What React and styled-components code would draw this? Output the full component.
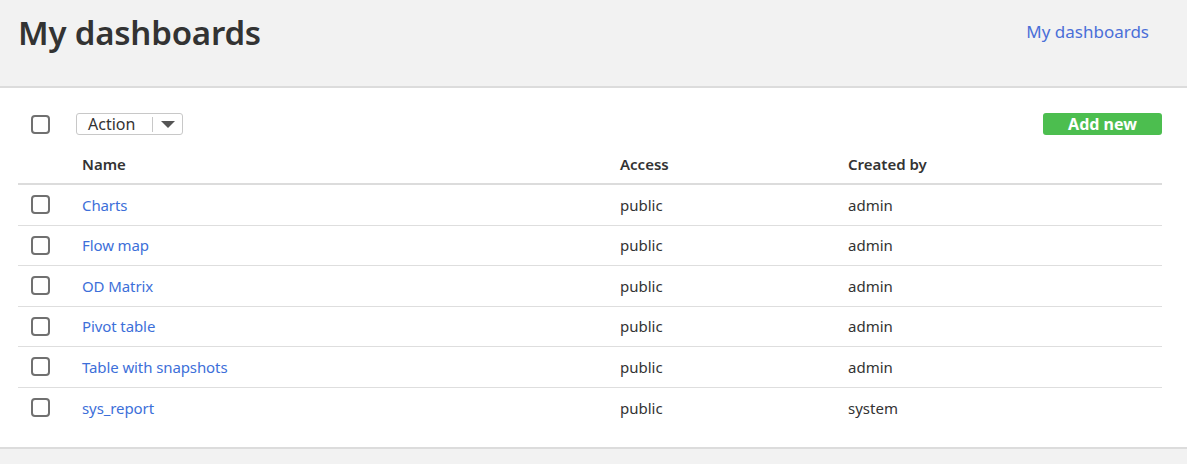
import styled, { createGlobalStyle } from "styled-components";

const GlobalStyle = createGlobalStyle`
  html, body {
    margin: 0;
    padding: 0;
    background: #f2f2f2;
    font-family: "Noto Sans", "Open Sans", "Liberation Sans", sans-serif;
    color: #333;
  }
`;

const Header = styled.header`
  height: 86px;
  display: flex;
  justify-content: space-between;
  align-items: flex-start;
  padding: 0 38px 0 18px;
  background: #f2f2f2;
  border-bottom: 2px solid #dcdcdc;
`;

const Title = styled.h1`
  margin: 10px 0 0;
  font-size: 33px;
  font-weight: 600;
  color: #333;
  letter-spacing: -0.2px;
`;

const Crumb = styled.a`
  margin-top: 20px;
  font-size: 17px;
  color: #4a6fd8;
  text-decoration: none;
`;

const Panel = styled.section`
  background: #fff;
  padding: 25px 25px 19px 18px;
  border-bottom: 2px solid #dcdcdc;
`;

const Toolbar = styled.div`
  display: flex;
  align-items: center;
  height: 22px;
  padding-left: 13px;
`;

const Check = styled.span`
  box-sizing: border-box;
  display: inline-block;
  width: 19px;
  height: 19px;
  border: 2px solid #707070;
  border-radius: 4px;
  background: #fff;
`;

const ActionButton = styled.div`
  margin-left: 26px;
  display: flex;
  align-items: center;
  height: 22px;
  border: 1px solid #c8c8c8;
  border-radius: 3px;
  box-sizing: border-box;
  font-size: 16px;
  color: #333;
`;

const ActionLabel = styled.span`
  width: 75px;
  box-sizing: border-box;
  padding-left: 11px;
  line-height: 20px;
`;

const Caret = styled.span`
  display: flex;
  align-items: center;
  justify-content: center;
  width: 29px;
  height: 15px;
  border-left: 1px solid #c8c8c8;
`;

const AddButton = styled.button`
  margin-left: auto;
  width: 119px;
  height: 22px;
  border: none;
  border-radius: 3px;
  background: #4cbe4f;
  color: #fff;
  font-family: inherit;
  font-size: 16px;
  font-weight: 700;
  padding: 0;
  line-height: 22px;
`;

const Table = styled.div`
  margin-top: 9px;
`;

const Row = styled.div`
  display: grid;
  grid-template-columns: 64px 538px 228px 1fr;
  align-items: center;
  height: ${(p) => (p.head ? "41px" : "40.5px")};
  border-bottom: ${(p) => (p.last ? "none" : p.head ? "2px solid #dcdcdc" : "1px solid #dedede")};
  box-sizing: border-box;
  font-size: 15px;
  font-weight: ${(p) => (p.head ? 600 : 400)};
  color: #333;
`;

const CheckCell = styled.div`
  padding-left: 13px;
  display: flex;
  align-items: center;
`;

const NameLink = styled.a`
  color: #3d6fd9;
  text-decoration: none;
  letter-spacing: -0.1px;
`;

const dashboards = [
  { name: "Charts", access: "public", owner: "admin" },
  { name: "Flow map", access: "public", owner: "admin" },
  { name: "OD Matrix", access: "public", owner: "admin" },
  { name: "Pivot table", access: "public", owner: "admin" },
  { name: "Table with snapshots", access: "public", owner: "admin" },
  { name: "sys_report", access: "public", owner: "system" },
];

export default function App() {
  return (
    <>
      <GlobalStyle />
      <Header>
        <Title>My dashboards</Title>
        <Crumb href="#">My dashboards</Crumb>
      </Header>
      <Panel>
        <Toolbar>
          <Check />
          <ActionButton>
            <ActionLabel>Action</ActionLabel>
            <Caret>
              <svg width="14" height="7" viewBox="0 0 14 7">
                <path d="M0 0h14L7 7z" fill="#555" />
              </svg>
            </Caret>
          </ActionButton>
          <AddButton>Add new</AddButton>
        </Toolbar>
        <Table>
          <Row head>
            <span />
            <span>Name</span>
            <span>Access</span>
            <span>Created by</span>
          </Row>
          {dashboards.map((d, i) => (
            <Row key={d.name} last={i === dashboards.length - 1}>
              <CheckCell>
                <Check />
              </CheckCell>
              <NameLink href="#">{d.name}</NameLink>
              <span>{d.access}</span>
              <span>{d.owner}</span>
            </Row>
          ))}
        </Table>
      </Panel>
    </>
  );
}
